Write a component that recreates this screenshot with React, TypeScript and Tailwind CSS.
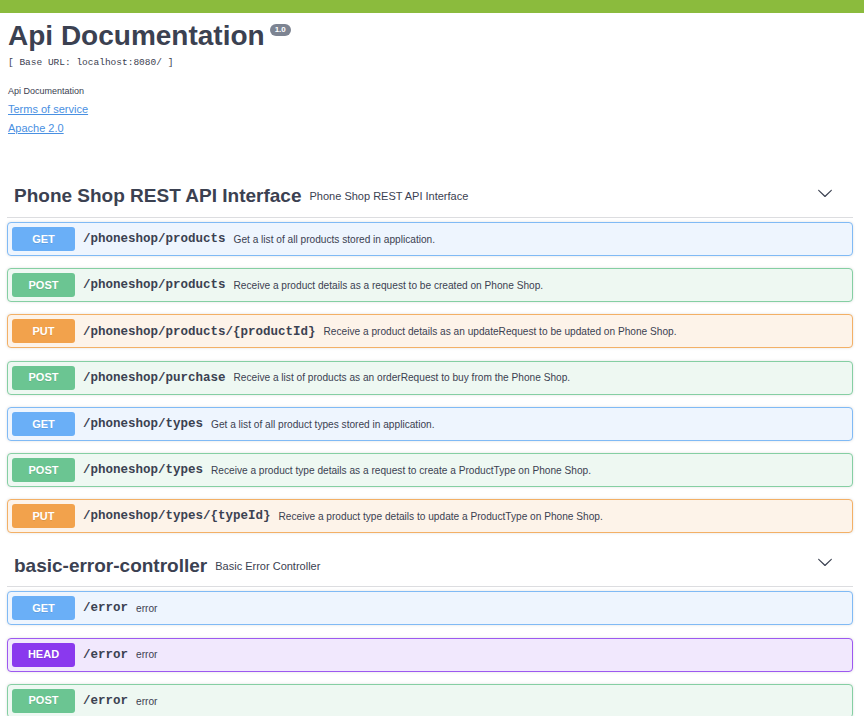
import React from 'react';

type Method = 'GET' | 'POST' | 'PUT' | 'HEAD';

type Operation = {
  method: Method;
  path: string;
  summary: string;
};

type Tag = {
  name: string;
  description: string;
  operations: Operation[];
};

// full class strings per method so tailwind picks them up
const methodStyles: Record<Method, { block: string; badge: string }> = {
  GET: { block: 'border-[#80baf5] bg-[#eef5fe]', badge: 'bg-[#6aaff7]' },
  POST: { block: 'border-[#85cfa3] bg-[#eef8f2]', badge: 'bg-[#6bc592]' },
  PUT: { block: 'border-[#f3b066] bg-[#fdf3e9]', badge: 'bg-[#f2a24c]' },
  HEAD: { block: 'border-[#9d58f0] bg-[#f1e8fd]', badge: 'bg-[#8a39ee]' },
};

const tags: Tag[] = [
  {
    name: 'Phone Shop REST API Interface',
    description: 'Phone Shop REST API Interface',
    operations: [
      { method: 'GET', path: '/phoneshop/products', summary: 'Get a list of all products stored in application.' },
      { method: 'POST', path: '/phoneshop/products', summary: 'Receive a product details as a request to be created on Phone Shop.' },
      { method: 'PUT', path: '/phoneshop/products/{productId}', summary: 'Receive a product details as an updateRequest to be updated on Phone Shop.' },
      { method: 'POST', path: '/phoneshop/purchase', summary: 'Receive a list of products as an orderRequest to buy from the Phone Shop.' },
      { method: 'GET', path: '/phoneshop/types', summary: 'Get a list of all product types stored in application.' },
      { method: 'POST', path: '/phoneshop/types', summary: 'Receive a product type details as a request to create a ProductType on Phone Shop.' },
      { method: 'PUT', path: '/phoneshop/types/{typeId}', summary: 'Receive a product type details to update a ProductType on Phone Shop.' },
    ],
  },
  {
    name: 'basic-error-controller',
    description: 'Basic Error Controller',
    operations: [
      { method: 'GET', path: '/error', summary: 'error' },
      { method: 'HEAD', path: '/error', summary: 'error' },
      { method: 'POST', path: '/error', summary: 'error' },
    ],
  },
];

function Chevron() {
  return (
    <svg width="16" height="16" viewBox="0 0 20 20" className="mr-[20px] mb-[7px] shrink-0" fill="#3b4151">
      <path d="M17.418 6.109c.272-.268.709-.268.979 0s.271.701 0 .969l-7.908 7.83c-.27.268-.707.268-.979 0l-7.908-7.830c-.27-.268-.27-.701 0-.969.271-.268.709-.268.979 0L10 13.25l7.418-7.141z" />
    </svg>
  );
}

function OperationRow({ op }: { op: Operation }) {
  const style = methodStyles[op.method];
  return (
    <div className={`flex items-center h-[34px] border rounded-[4px] px-[4px] mb-[12.2px] shadow-[0_0_3px_rgba(0,0,0,0.12)] ${style.block}`}>
      <span className={`w-[63px] h-[24px] rounded-[3px] flex items-center justify-center text-white text-[11px] font-bold shrink-0 [text-shadow:0_1px_0_rgba(0,0,0,0.1)] ${style.badge}`}>
        {op.method}
      </span>
      <span className="pl-[8px] pr-[8px] pt-[1px] font-['Liberation_Mono','Courier_New',monospace] font-bold text-[12.5px] text-[#3b4151]">
        {op.path}
      </span>
      <span className="pt-[1px] text-[10.15px] text-[#3b4151]">{op.summary}</span>
    </div>
  );
}

function TagSection({ tag, first }: { tag: Tag; first?: boolean }) {
  return (
    <div className={first ? 'mt-[41px]' : ''}>
      <div className="flex items-center h-[42px] border-b border-[#dcdde0] pl-[7px] mb-[4px]">
        <span className="text-[19px] font-bold text-[#3b4151]">{tag.name}</span>
        <small className="text-[11px] ml-[8px] text-[#3b4151]">{tag.description}</small>
        <div className="flex-1" />
        <Chevron />
      </div>
      {tag.operations.map((op, i) => (
        <OperationRow key={i} op={op} />
      ))}
    </div>
  );
}

export default function App() {
  return (
    <div className="bg-white min-h-screen font-['Liberation_Sans',Arial,sans-serif] text-[#3b4151]">
      <div className="h-[13px] bg-[#8bbb3d]" />
      <div className="pl-[7px] pr-[11px]">
        {/* info block */}
        <div className="pl-[1px]">
          <div className="flex items-start mt-[9px]">
            <h2 className="text-[28px] leading-[28px] h-[28px] font-bold">Api Documentation</h2>
            <span className="ml-[5px] mt-[2px] h-[12px] px-[5px] rounded-full bg-[#7d8492] text-white text-[8px] leading-[12px] font-bold">
              1.0
            </span>
          </div>
          <div className="mt-[7px] h-[12px] leading-[12px] text-[9.5px] font-['Liberation_Mono','Courier_New',monospace]">
            [ Base URL: localhost:8080/ ]
          </div>
          <div className="mt-[16px] h-[12px] leading-[12px] text-[9px]">Api Documentation</div>
          <div className="mt-[5px] h-[14px] leading-[14px] text-[11px]">
            <a href="#" className="text-[#4990e2] underline">Terms of service</a>
          </div>
          <div className="mt-[5px] h-[14px] leading-[14px] text-[11px]">
            <a href="#" className="text-[#4990e2] underline">Apache 2.0</a>
          </div>
        </div>

        {tags.map((tag, i) => (
          <TagSection key={tag.name} tag={tag} first={i === 0} />
        ))}
      </div>
    </div>
  );
}
